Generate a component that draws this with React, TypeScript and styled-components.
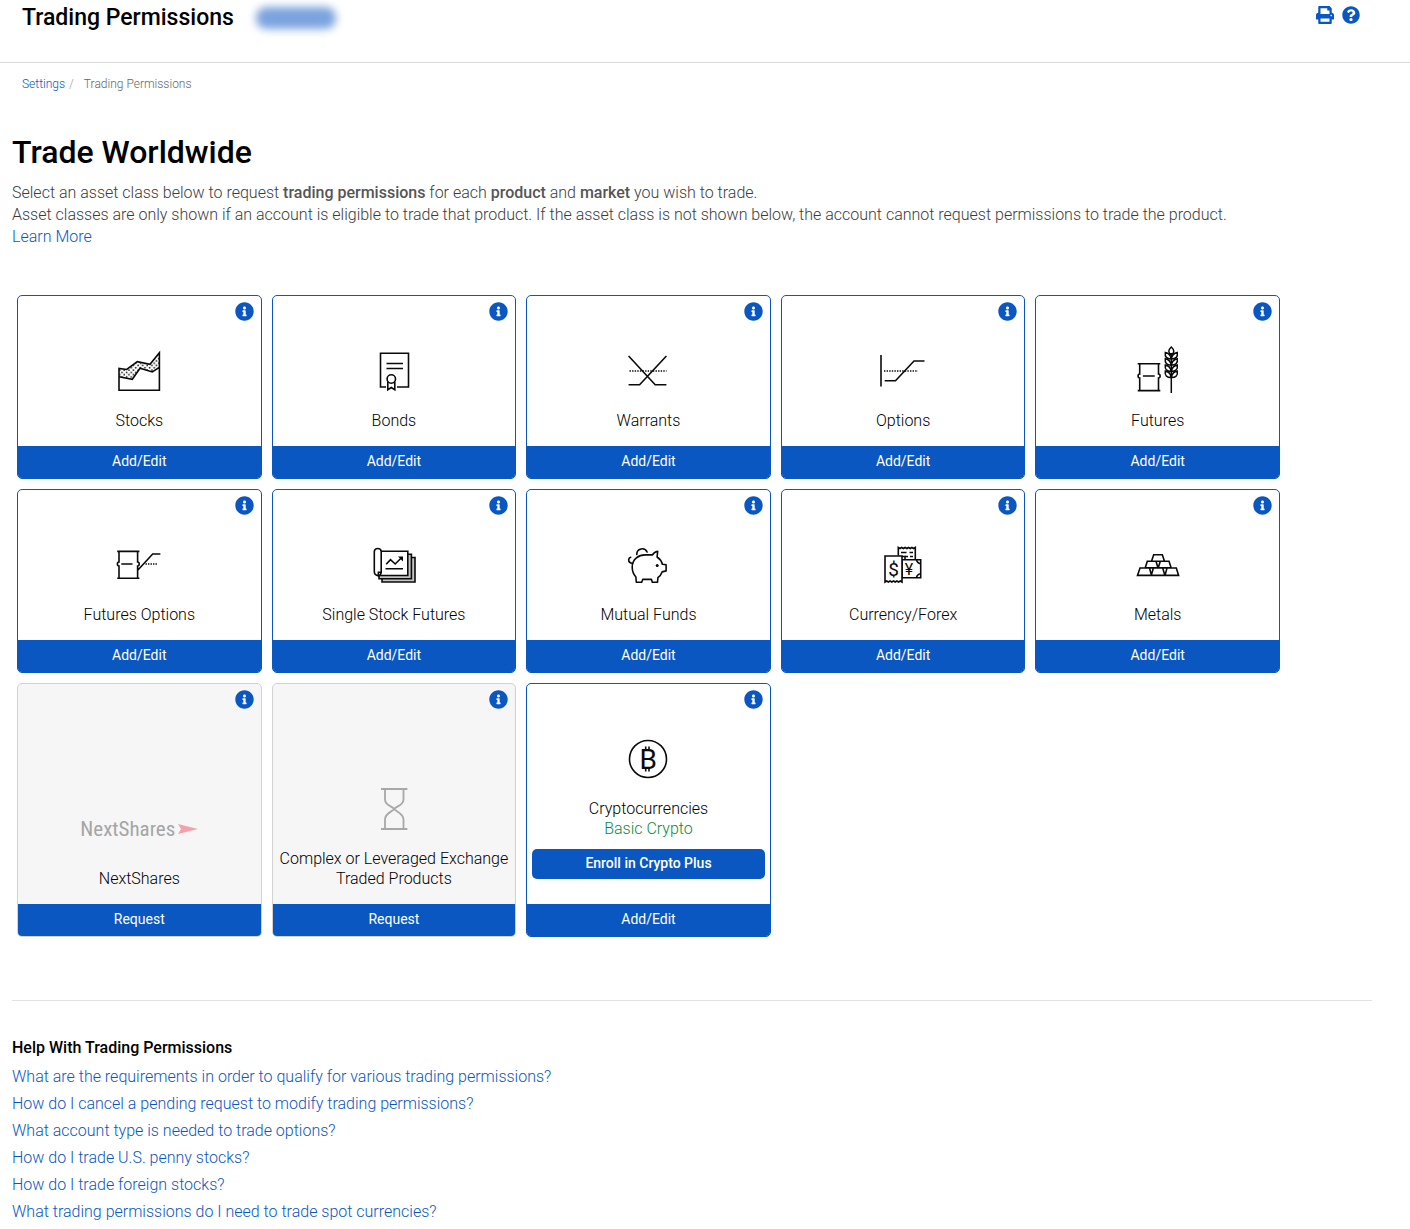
import React from "react";
import styled, { createGlobalStyle } from "styled-components";
import { FaInfoCircle, FaPrint, FaQuestionCircle } from "react-icons/fa";

const blue = "#0b57c1";
const sans = `Roboto, "Liberation Sans", sans-serif`;

const GlobalStyle = createGlobalStyle`
  * { box-sizing: border-box; }
  body { margin: 0; background: #fff; color: #000; font-family: ${sans}; font-size: 16px; font-weight: 300; line-height: 22px; }
  h1, h2, h3, p, ul, ol { margin: 0; padding: 0; font-weight: 300; }
  ul, ol { list-style: none; }
  button { font-family: inherit; border: 0; padding: 0; margin: 0; cursor: pointer; }
  a { color: ${blue}; text-decoration: none; }
  a:hover { text-decoration: underline; }
  svg { display: block; }
`;

const TopBar = styled.header`
  display: flex;
  align-items: flex-start;
  justify-content: space-between;
  height: 63px;
  padding: 2px 50px 0 22px;
  border-bottom: 1px solid #d9d9d9;
`;

const TitleGroup = styled.div`
  display: flex;
  align-items: center;
  gap: 22px;
`;

const PageTitle = styled.h1`
  font-size: 23px;
  line-height: 32px;
  font-weight: 500;
`;

const AccountPill = styled.span`
  width: 80px;
  height: 22px;
  border-radius: 10px;
  background: #7ba3de;
  filter: blur(4px);
`;

const Tools = styled.div`
  display: flex;
  gap: 8px;
  padding-top: 4px;
`;

const IconButton = styled.button<{ $size: number }>`
  display: flex;
  background: none;
  color: ${blue};
  font-size: ${(p) => p.$size}px;
`;

const Crumbs = styled.ol`
  display: flex;
  padding: 13px 22px 0;
  font-size: 12px;
  line-height: 16px;
  color: #666;

  li + li::before {
    content: "/";
    color: #999;
    padding: 0 10px 0 4px;
  }
`;

const Main = styled.main`
  padding: 40px 38px 0 12px;
`;

const Heading = styled.h2`
  font-size: 32px;
  line-height: 40px;
  font-weight: 500;
  margin-bottom: 10px;
`;

const Intro = styled.p`
  color: #3c3c3c;

  strong { font-weight: 500; color: #555; }
`;

const CardGrid = styled.ul`
  display: grid;
  grid-template-columns: repeat(auto-fill, minmax(240px, 1fr));
  gap: 10px;
  margin: 47px 92px 0 5px;
`;

const Card = styled.li<{ $muted?: boolean }>`
  display: flex;
  flex-direction: column;
  overflow: hidden;
  border: 1px solid ${(p) => (p.$muted ? "#d2d2d2" : blue)};
  border-radius: 5px;
  background: ${(p) => (p.$muted ? "#f6f6f6" : "#fff")};
`;

const CardTop = styled.div`
  display: flex;
  justify-content: flex-end;
  height: 50px;
  padding: 6px 7px 0;
`;

const CardBody = styled.div`
  display: flex;
  flex: 1;
  flex-direction: column;
  align-items: center;
  justify-content: flex-end;
  padding: 0 5px 15px;
`;

const CardLabel = styled.h3`
  margin-top: 15px;
  font-size: 16px;
  line-height: 20px;
  text-align: center;
`;

const CardStatus = styled.p`
  line-height: 20px;
  color: #0a8a3c;
`;

const CardAction = styled.button`
  height: 32px;
  padding-bottom: 2px;
  background: ${blue};
  color: #fff;
  font-size: 14px;
  font-weight: 400;
`;

const EnrollButton = styled.button`
  align-self: stretch;
  height: 30px;
  margin: 10px 0;
  padding-bottom: 2px;
  border-radius: 5px;
  background: ${blue};
  color: #fff;
  font-size: 14px;
  font-weight: 500;
`;

const Help = styled.section`
  margin-top: 63px;
  padding: 36px 0 4px;
  border-top: 1px solid #e2e2e2;
`;

const HelpTitle = styled.h3`
  margin-bottom: 4px;
  font-size: 16px;
  font-weight: 500;
`;

const HelpItem = styled.li`
  line-height: 27px;
`;

const Glyph = styled.svg`
  width: 50px;
  height: 50px;
  fill: none;
  stroke: #0a0a0a;
  stroke-width: 1.6;
`;

const NextSharesMark = styled.div`
  display: flex;
  align-items: center;
  height: 50px;
  gap: 3px;
  color: #a5a5a5;
  font-family: "Roboto Condensed", "Liberation Sans Narrow", ${sans};
  font-size: 21px;
  font-weight: 400;
  line-height: 24px;
`;

const StocksIcon = () => (
  <Glyph viewBox="0 0 50 50" aria-hidden="true">
    <defs>
      <pattern id="dots" width="4.6" height="4.6" patternUnits="userSpaceOnUse">
        <circle cx="1.1" cy="1.1" r="0.85" fill="#0a0a0a" stroke="none" />
        <circle cx="3.4" cy="3.4" r="0.85" fill="#0a0a0a" stroke="none" />
      </pattern>
    </defs>
    <path fill="url(#dots)" stroke="none" d="M5 22.5l7.7 1 10.6-7.8L36 18.3l9.4-11.6v14.6L38.3 26 26 22.3l-7.7 11L5 30.7z" />
    <path d="M5 44.3V22.5l7.7 1 10.6-7.8L36 18.3l9.4-11.6v37.6zM5 30.7l13.3 2.6 7.7-11L38.3 26l7.1-4.7" />
  </Glyph>
);

const BondsIcon = () => (
  <Glyph viewBox="0 0 50 50" aria-hidden="true">
    <path d="M17 41h-5.5V7.3h28V41H28M17.5 17.5H34M17.5 22.5H34" />
    <circle cx="22.3" cy="33" r="4.2" />
    <path d="M18.8 36v7.7l3.5-2.2 3.5 2.2V36" />
  </Glyph>
);

const WarrantsIcon = () => (
  <Glyph viewBox="0 0 50 50" aria-hidden="true">
    <path d="M5.6 10l26.6 28.7h11.2M43.4 10L16.6 38.7H5.6" />
    <path strokeWidth="1.4" strokeDasharray="1.4 1.2" d="M6.5 25h37" />
  </Glyph>
);

const OptionsIcon = () => (
  <Glyph viewBox="0 0 50 50" aria-hidden="true">
    <path d="M3 9v31.5M6.7 34.7h10.8L36 15h10.5" />
    <path strokeWidth="1.4" strokeDasharray="1.4 1.2" d="M6 25h34" />
  </Glyph>
);

const FuturesIcon = () => (
  <Glyph viewBox="0 0 50 50" aria-hidden="true">
    <path d="M4.7 17.7h22.6M4.7 44.6h22.6M10 30h11.7M6.7 17.7v10.3a1.600 2 0 0 0 0 4v12.600M25.500 17.700v10.300a1.600 2 0 0 1 0 4v12.600" />
    <path strokeWidth="1.5" d="M38.3 7v40M38.3 1q-5 4.5 0 8 5-3.500 0-8z" />
    {[0, 6.2, 12.4, 18.6].map((y) => (
      <path
        key={y}
        strokeWidth="1.5"
        transform={`translate(38.3 ${y + 13})`}
        d="M0 0Q-7 0-6-6.500-.8-5.500 0 0 7 0 6-6.500.8-5.500 0 0z"
      />
    ))}
  </Glyph>
);

const FuturesOptionsIcon = () => (
  <Glyph viewBox="0 0 50 50" aria-hidden="true">
    <path d="M3.200 11.400h22.200M3.200 38.300h22.200M7.300 24h11.200M5 11.400v10.600a1.600 2 0 0 0 0 4v12.300M23.600 11.400v10.600a1.600 2 0 0 1 0 4v12.300M23.700 30.200L38.700 14h7.700" />
    <path strokeWidth="1.3" strokeDasharray="1.4 1.1" d="M31.500 24H44" />
  </Glyph>
);

const SingleStockIcon = () => (
  <Glyph viewBox="0 0 50 50" aria-hidden="true">
    <path fill="#c4c4c4" d="M13 36v6h33V17.500h-4" />
    <path fill="#c4c4c4" d="M10 36v2.800h32.400V14.300h-4" />
    <path fill="#fff" d="M9 35.500h29.800V11.300H9z" />
    <path fill="#fff" d="M5.300 31.500V11.500q.3-3 3.500-3 3.200 0 3.400 3v20.700H9.400v3.400q-4-.2-4.100-4.100z" />
    <path d="M9 35.600q3-.2 3.200-3.400M16.500 28.700H34M17.200 24.300l4.300-4.600 4.700 4.300 6-6" />
    <path fill="#0a0a0a" stroke="none" d="M29 16.600h5v5z" />
  </Glyph>
);

const MutualFundsIcon = () => (
  <Glyph viewBox="0 0 50 50" strokeLinejoin="round" strokeLinecap="round" aria-hidden="true">
    <path d="M9.200 27C9.200 18.500 16 14.900 22 14.900h7.500q1.500-3 5.200-3.700l-.6 5.800q4 2.600 5.300 7.200l3.700.5v6.200l-4 1q-1.400 3.900-4.200 5.800l-.4 4.500h-5.200l-.8-2.800h-8.800l-1 2.800h-5.400l-.4-5.200Q9.200 33 9.200 27z" />
    <path d="M13.800 14.500a5.400 5.400 0 0 1 10.300-2.500M9.500 23.300q-4-.6-3.800-3.600.2-2 2-2.500" />
    <circle cx="34.200" cy="25.500" r="1.500" fill="#0a0a0a" stroke="none" />
  </Glyph>
);

const GlyphText = styled.text`
  fill: #0a0a0a;
  stroke: none;
  text-anchor: middle;
  font-family: ${sans};
`;

const CurrencyIcon = () => (
  <Glyph viewBox="0 0 50 50" aria-hidden="true">
    <path d="M20.300 15.500V7.500l1.700 1 1.700-1 1.700 1 1.700-1 1.700 1 1.700-1 1.700 1 1.700-1 1.700 1 1.700-1v12M23 12.500h5.500M31.500 12.500H35M27 16.500h3M32 16.500h3" />
    <path fill="#fff" d="M24 19.700h18.700v18H24z" />
    <path d="M38.500 19.700q.5 3.600 4.200 4M38.500 37.700q.5-3.600 4.200-4M24 16.500h3v3" />
    <path fill="#fff" d="M7 42V16h17v26l-1.700-1-1.700 1-1.700-1-1.700 1-1.700-1-1.700 1-1.700-1-1.700 1-1.700-1z" />
    <GlyphText x="15.500" y="35.500" fontSize="19" fontWeight="400">$</GlyphText>
    <GlyphText x="31" y="34.500" fontSize="16" fontWeight="400">¥</GlyphText>
  </Glyph>
);

const MetalsIcon = () => (
  <Glyph viewBox="0 0 50 50" aria-hidden="true">
    <path d="M20.700 14.700h8.600l2.200 6.500h-13zM14.300 21.200H23l2 6.700H12.200zM27.300 21.200H36l2.200 6.700H25.200zM7 28h9.500l2 7.400h-14zM20.400 28h9.300l2.200 7.400H18.200zM34 28h9.300l2.300 7.400H32z" />
  </Glyph>
);

const HourglassIcon = () => (
  <Glyph viewBox="0 0 50 50" aria-hidden="true">
    <g stroke="#a8a8a8" strokeWidth="1.800">
      <path d="M12 5h26.400M12 45h26.400M16 5v10.500c0 6 7 6.500 9.200 9.500 2 3 9.300 4 9.300 10.500V45M34.500 5v10.500c0 6-7.300 6.500-9.300 9.500-2.200 3-9.200 4-9.200 10.500V45" />
    </g>
  </Glyph>
);

const CryptoIcon = () => (
  <Glyph viewBox="0 0 50 50" aria-hidden="true">
    <circle cx="25" cy="25" r="18.500" />
    <path d="M22.700 12.500v3M26 12.500v3M22.700 34.500v3M26 34.500v3" />
    <GlyphText x="25.300" y="35" fontSize="28" fontWeight="400">B</GlyphText>
  </Glyph>
);

const NextSharesLogo = () => (
  <NextSharesMark aria-hidden="true">
    <span>NextShares</span>
    <svg width="20" height="12" viewBox="0 0 20 12">
      <path fill="#f5a0aa" d="M0 1l20 5L0 11l3-5z" />
    </svg>
  </NextSharesMark>
);

type Product = {
  name: string;
  icon: React.ComponentType;
  action: string;
  muted?: boolean;
  status?: string;
  upgrade?: string;
};

const products: Product[] = [
  { name: "Stocks", icon: StocksIcon, action: "Add/Edit" },
  { name: "Bonds", icon: BondsIcon, action: "Add/Edit" },
  { name: "Warrants", icon: WarrantsIcon, action: "Add/Edit" },
  { name: "Options", icon: OptionsIcon, action: "Add/Edit" },
  { name: "Futures", icon: FuturesIcon, action: "Add/Edit" },
  { name: "Futures Options", icon: FuturesOptionsIcon, action: "Add/Edit" },
  { name: "Single Stock Futures", icon: SingleStockIcon, action: "Add/Edit" },
  { name: "Mutual Funds", icon: MutualFundsIcon, action: "Add/Edit" },
  { name: "Currency/Forex", icon: CurrencyIcon, action: "Add/Edit" },
  { name: "Metals", icon: MetalsIcon, action: "Add/Edit" },
  { name: "NextShares", icon: NextSharesLogo, action: "Request", muted: true },
  { name: "Complex or Leveraged Exchange Traded Products", icon: HourglassIcon, action: "Request", muted: true },
  { name: "Cryptocurrencies", icon: CryptoIcon, action: "Add/Edit", status: "Basic Crypto", upgrade: "Enroll in Crypto Plus" },
];

const questions = [
  "What are the requirements in order to qualify for various trading permissions?",
  "How do I cancel a pending request to modify trading permissions?",
  "What account type is needed to trade options?",
  "How do I trade U.S. penny stocks?",
  "How do I trade foreign stocks?",
  "What trading permissions do I need to trade spot currencies?",
];

export default function App() {
  return (
    <>
      <GlobalStyle />
      <TopBar>
        <TitleGroup>
          <PageTitle>Trading Permissions</PageTitle>
          <AccountPill />
        </TitleGroup>
        <Tools>
          <IconButton type="button" aria-label="Print" $size={18}><FaPrint /></IconButton>
          <IconButton type="button" aria-label="Help" $size={18}><FaQuestionCircle /></IconButton>
        </Tools>
      </TopBar>
      <nav aria-label="Breadcrumb">
        <Crumbs>
          <li><a href="#settings">Settings</a></li>
          <li aria-current="page">Trading Permissions</li>
        </Crumbs>
      </nav>
      <Main>
        <Heading>Trade Worldwide</Heading>
        <Intro>
          Select an asset class below to request <strong>trading permissions</strong> for each{" "}
          <strong>product</strong> and <strong>market</strong> you wish to trade.
        </Intro>
        <Intro>
          Asset classes are only shown if an account is eligible to trade that product. If the asset
          class is not shown below, the account cannot request permissions to trade the product.
        </Intro>
        <Intro><a href="#learn-more">Learn More</a></Intro>
        <CardGrid>
          {products.map(({ name, icon: Icon, action, muted, status, upgrade }) => (
            <Card key={name} $muted={muted}>
              <CardTop>
                <IconButton type="button" aria-label={`About ${name}`} $size={19}><FaInfoCircle /></IconButton>
              </CardTop>
              <CardBody>
                <Icon />
                <CardLabel>{name}</CardLabel>
                {status && <CardStatus>{status}</CardStatus>}
                {upgrade && <EnrollButton type="button">{upgrade}</EnrollButton>}
              </CardBody>
              <CardAction type="button">{action}</CardAction>
            </Card>
          ))}
        </CardGrid>
        <Help>
          <HelpTitle>Help With Trading Permissions</HelpTitle>
          <ul>
            {questions.map((q) => (
              <HelpItem key={q}><a href="#help">{q}</a></HelpItem>
            ))}
          </ul>
        </Help>
      </Main>
    </>
  );
}
